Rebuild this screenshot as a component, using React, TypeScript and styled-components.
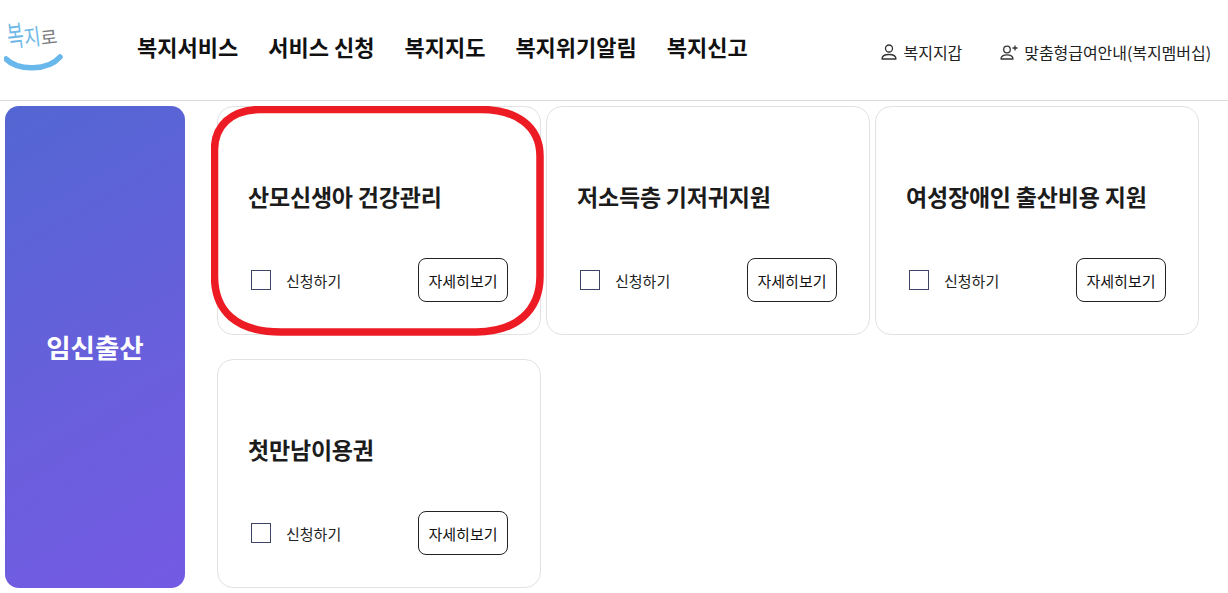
import styled, { createGlobalStyle } from 'styled-components';

//data
const NAV_ITEMS = ['복지서비스', '서비스 신청', '복지지도', '복지위기알림', '복지신고'];
const CARDS = ['산모신생아 건강관리', '저소득층 기저귀지원', '여성장애인 출산비용 지원', '첫만남이용권'];

//styled component
const GlobalStyle = createGlobalStyle`
  html, body {
    margin: 0;
    padding: 0;
    background: #fff;
    font-family: 'Noto Sans CJK KR', 'Noto Sans', sans-serif;
  }
  * {
    box-sizing: border-box;
  }
`;

const Page = styled.div`
  width: 1228px;
  height: 593px;
  overflow: hidden;
`;

const Header = styled.header`
  display: flex;
  height: 101px;
  border-bottom: 1px solid #dcdcdc;
`;

const Logo = styled.a`
  position: relative;
  display: block;
  width: 137px;
  flex: none;
`;

const LogoWord = styled.span`
  display: flex;
  align-items: flex-end;
  width: 60px;
  height: 34px;
  margin: 18px 0 0 9px;
  transform: rotate(-7deg);
  transform-origin: left bottom;
`;

const LogoGlyph = styled.span<{ $color: string; $stretch: number }>`
  display: block;
  font-size: 18px;
  line-height: 22px;
  font-weight: 400;
  margin-right: 0;
  color: ${(props) => props.$color};
  transform: scaleY(${(props) => props.$stretch});
  transform-origin: center bottom;
`;

const Smile = styled.svg`
  position: absolute;
  left: 4px;
  top: 54px;
`;

const Nav = styled.nav`
  display: flex;
  gap: 30px;
  padding-top: 31px;
  flex: none;
`;

const NavItem = styled.a`
  font-size: 22px;
  line-height: 30px;
  font-weight: 700;
  color: #111;
`;

const Utils = styled.div`
  display: flex;
  gap: 38px;
  margin-left: auto;
  padding: 41px 17px 0 0;
`;

const UtilItem = styled.a`
  display: flex;
  align-items: center;
  gap: 6px;
  height: 22px;
  font-size: 16px;
  color: #222;
  letter-spacing: -0.05px;
`;

const Body = styled.main`
  display: flex;
  gap: 32px;
  padding: 5px 0 0 5px;
`;

const SidePanel = styled.aside`
  display: flex;
  align-items: center;
  justify-content: center;
  width: 180px;
  height: 482px;
  padding-bottom: 2px;
  border-radius: 14px;
  background: linear-gradient(150deg, #5366d2 0%, #6a5fdd 60%, #745ae3 100%);
  color: #fff;
  font-size: 26.500px;
  font-weight: 700;
`;

const CardGrid = styled.section`
  display: grid;
  grid-template-columns: repeat(3, 324px);
  grid-auto-rows: 229px;
  column-gap: 5px;
  row-gap: 24px;
`;

const StyledCard = styled.article`
  position: relative;
  display: flex;
  flex-direction: column;
  padding: 72px 32px 32px 30px;
  border: 1px solid #e2e2e2;
  border-radius: 16px;
`;

const CardTitle = styled.h3`
  margin: 0;
  font-size: 23px;
  line-height: 34px;
  font-weight: 700;
  color: #1c1c1c;
  letter-spacing: -0.2px;
`;

const CardFooter = styled.div`
  display: flex;
  align-items: center;
  justify-content: space-between;
  margin-top: auto;
`;

const ApplyLabel = styled.label`
  display: flex;
  align-items: center;
  gap: 15px;
  padding-left: 3px;
  font-size: 15px;
  color: #222;
`;

const Checkbox = styled.input`
  appearance: none;
  width: 20px;
  height: 20px;
  margin: 0;
  border: 1px solid #3d4468;
  background: #fff;
`;

const DetailButton = styled.button`
  width: 90px;
  height: 44px;
  padding: 0;
  border: 1px solid #222;
  border-radius: 8px;
  background: #fff;
  font-family: inherit;
  font-size: 15px;
  color: #111;
`;

const Highlight = styled.svg`
  position: absolute;
  left: -7px;
  top: -1px;
  pointer-events: none;
`;

function PersonIcon() {
  return (
    <svg width="18" height="18" viewBox="0 0 18 18" fill="none" stroke="#333" strokeWidth="1.3">
      <circle cx="9" cy="5.5" r="3.5" />
      <path d="M2 16c0-3 2.5-4.5 7-4.5s7 1.500 7 4.500z" strokeLinejoin="round" />
    </svg>
  );
}

function PersonPlusIcon() {
  return (
    <svg width="18" height="18" viewBox="0 0 18 18" fill="none" stroke="#333" strokeWidth="1.300">
      <circle cx="7" cy="6.500" r="3.300" />
      <path d="M1 16c0-2.800 2.200-4.200 6-4.200s6 1.400 6 4.200z" strokeLinejoin="round" />
      <path d="M12.500 5h5M15 2.500v5" />
    </svg>
  );
}

function ServiceCard({ title, highlighted = false }: { title: string; highlighted?: boolean }) {
  return (
    <StyledCard>
      <CardTitle>{title}</CardTitle>
      <CardFooter>
        <ApplyLabel>
          <Checkbox type="checkbox" />
          신청하기
        </ApplyLabel>
        <DetailButton type="button">자세히보기</DetailButton>
      </CardFooter>
      {highlighted ? (
        <Highlight width="333" height="230" viewBox="0 0 333 230" fill="none">
          <path
            d="M3.500 45C3 20 20 3.500 50 3.500L270 3.500C305 3.500 329 20 329 50L329 170C329 205 305 226 265 226L70 226C25 226 3.500 205 3.500 170Z"
            stroke="#ed1c24"
            strokeWidth="7.500"
          />
        </Highlight>
      ) : (
        ''
      )}
    </StyledCard>
  );
}

function App() {
  return (
    <Page>
      <GlobalStyle />
      <Header>
        <Logo>
          <LogoWord>
            <LogoGlyph $color="#6fb9e8" $stretch={1.6}>
              복
            </LogoGlyph>
            <LogoGlyph $color="#6fb9e8" $stretch={1.25}>
              지
            </LogoGlyph>
            <LogoGlyph $color="#77797d" $stretch={1}>
              로
            </LogoGlyph>
          </LogoWord>
          <Smile width="60" height="18" viewBox="0 0 60 18" fill="none">
            <path d="M2 5C14 17 44 17 56 3" stroke="#69b8ec" strokeWidth="5.500" strokeLinecap="round" />
          </Smile>
        </Logo>
        <Nav>
          {NAV_ITEMS.map((item) => (
            <NavItem key={item}>{item}</NavItem>
          ))}
        </Nav>
        <Utils>
          <UtilItem>
            <PersonIcon />
            복지지갑
          </UtilItem>
          <UtilItem>
            <PersonPlusIcon />
            맞춤형급여안내(복지멤버십)
          </UtilItem>
        </Utils>
      </Header>
      <Body>
        <SidePanel>임신출산</SidePanel>
        <CardGrid>
          {CARDS.map((title, index) => (
            <ServiceCard key={title} title={title} highlighted={index === 0} />
          ))}
        </CardGrid>
      </Body>
    </Page>
  );
}

export default App;
